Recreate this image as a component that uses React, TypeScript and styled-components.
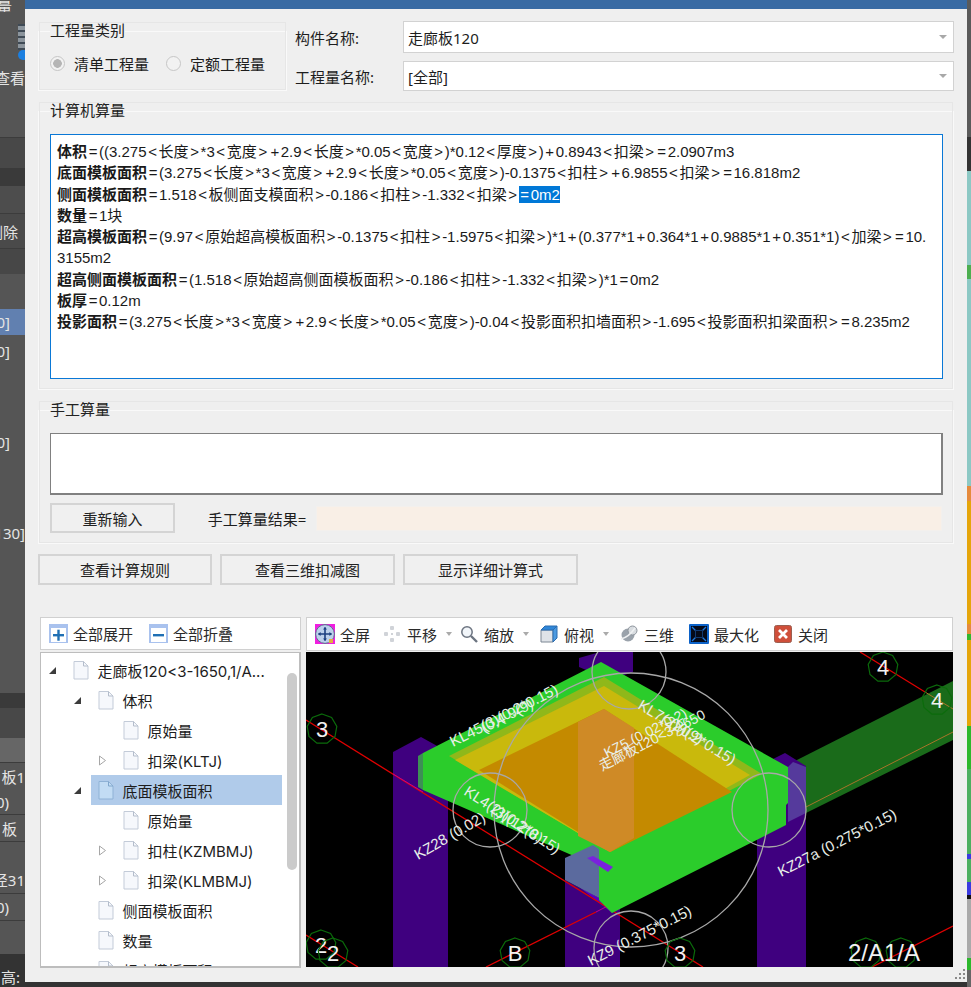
import React from 'react';
import styled, { createGlobalStyle } from 'styled-components';

const FONT = `"Noto Sans", "Noto Sans CJK SC", sans-serif`;
const WIDE = `"Inter", "Noto Sans CJK SC", sans-serif`;
const NARROW = `"Liberation Sans", "Noto Sans CJK SC", sans-serif`;

const Global = createGlobalStyle`
  html, body { margin: 0; padding: 0; background: #333; }
  body { width: 971px; height: 987px; overflow: hidden; font-family: ${FONT}; }
  * { box-sizing: border-box; }
`;

const Page = styled.div`
  display: grid;
  grid-template-columns: 25px 942px 4px;
  width: 971px;
  height: 987px;
  overflow: hidden;
`;

/* ---------- left strip (window behind the dialog) ---------- */
const Strip = styled.div`
  display: flex;
  flex-direction: column;
  overflow: hidden;
  background: #555;
`;
const SideRow = styled.div<{ $h: number; $bg?: string; $line?: boolean; $pad?: number }>`
  flex: 0 0 ${p => p.$h}px;
  display: flex;
  align-items: center;
  justify-content: flex-end;
  padding-right: ${p => p.$pad ?? 0}px;
  background: ${p => p.$bg ?? '#555'};
  border-bottom: ${p => (p.$line ? '1px solid #3c3c3c' : 'none')};
  color: #e4e4e4;
  font-size: 15px;
  white-space: nowrap;
  overflow: hidden;
`;
const SideIcon = styled.div`
  width: 7px;
  height: 26px;
  background: repeating-linear-gradient(#3f4a55 0 2px, #8b949c 2px 6px);
`;
const SideDot = styled.div`
  width: 7px;
  height: 10px;
  background: #1b7fe0;
  border-radius: 7px 0 0 7px;
`;

/* ---------- right strip (window behind the dialog) ---------- */
const RightStrip = styled.div`
  display: flex;
  flex-direction: column;
  overflow: hidden;
`;
const Band = styled.div<{ $h: number; $c: string }>`
  flex: 0 0 ${p => p.$h}px;
  background: ${p => p.$c};
`;

/* ---------- dialog ---------- */
const Dialog = styled.div`
  position: relative;
  height: 982px;
  background: #efefef;
  overflow: hidden;
  color: #1d1d1d;
  font-size: 15px;
`;
const TitleBar = styled.div`
  height: 9px;
  background: #386aa3;
`;
const Body = styled.div`
  padding: 12px 13px 0 13px;
  display: flex;
  flex-direction: column;
`;
const TopRow = styled.div`
  display: flex;
  gap: 8px;
  height: 70px;
`;
const Group = styled.fieldset<{ $w: string; $h: number; $mt?: number }>`
  width: ${p => p.$w};
  height: ${p => p.$h}px;
  margin: ${p => p.$mt ?? 0}px 0 0 0;
  padding: 0 11px;
  min-width: 0;
  border: 1px solid #f9f9f9;
  outline: 1px solid #e6e6e6;
  outline-offset: -2px;
`;
const Legend = styled.legend`
  padding: 0;
  margin-left: 0;
  height: 20px;
  line-height: 18px;
  background: #efefef;
  color: #222;
`;
const RadioRow = styled.div`
  display: flex;
  align-items: center;
  height: 32px;
  margin-top: 6px;
  white-space: nowrap;
`;
const Radio = styled.span<{ $on?: boolean }>`
  flex: 0 0 15px;
  height: 15px;
  border-radius: 50%;
  border: 1px solid #c6c6c6;
  background: ${p => (p.$on ? 'radial-gradient(circle, #b5b5b5 0 4px, #f2f2f2 4.6px)' : '#f2f2f2')};
  margin-right: 9px;
`;
const RadioText = styled.span`
  margin-right: 17px;
`;
const FormCol = styled.div`
  flex: 1;
  display: flex;
  flex-direction: column;
  gap: 8px;
`;
const FormRow = styled.div<{ $h: number }>`
  display: flex;
  align-items: center;
  height: ${p => p.$h}px;
`;
const FormLabel = styled.span`
  width: 108px;
`;
const Combo = styled.div`
  flex: 1;
  height: 100%;
  background: #fff;
  border: 1px solid #d2d2d2;
  display: flex;
  align-items: center;
  justify-content: space-between;
  padding: 0 6px 0 4px;
`;
const Caret = styled.span`
  width: 0;
  height: 0;
  border-left: 4px solid transparent;
  border-right: 4px solid transparent;
  border-top: 4px solid #a8a8a8;
`;
const FormulaBox = styled.div`
  height: 245px;
  margin-top: 13px;
  width: 893px;
  background: #fff;
  border: 1px solid #0a78d6;
  padding: 6px 6px;
  font-family: ${NARROW};
  font-size: 15px;
  line-height: 21.3px;
  color: #1a1a1a;
  white-space: nowrap;
`;
const FormulaLine = styled.div``;
const Strong = styled.b`
  font-weight: 700;
`;
const Op = styled.span`
  display: inline-block;
  width: 12px;
  text-align: center;
`;
const Selected = styled.span`
  background: #0078d7;
  color: #fff;
`;
const ManualBox = styled.div`
  height: 62px;
  width: 893px;
  margin-top: 13px;
  background: #fff;
  border: 1px solid #808080;
  border-width: 1px 2px 2px 1px;
`;
const ManualRow = styled.div`
  display: flex;
  align-items: center;
  margin-top: 8px;
  height: 30px;
`;
const Btn = styled.div<{ $w: number }>`
  width: ${p => p.$w}px;
  height: 100%;
  display: flex;
  align-items: center;
  justify-content: center;
  background: #f0f0f0;
  border: 2px solid #d4d4d4;
  color: #222;
`;
const ResultLabel = styled.span`
  margin-left: 33px;
  width: 108px;
  white-space: nowrap;
`;
const ResultField = styled.div`
  width: 627px;
  height: 25px;
  background: #f9efe6;
  border: 1px solid #f3f0ed;
`;
const ActionRow = styled.div`
  display: flex;
  gap: 8px;
  height: 31px;
  margin-top: 10px;
`;

/* ---------- bottom panels ---------- */
const Panels = styled.div`
  display: flex;
  gap: 5px;
  margin: 32px 0 0 2px;
`;
const TreePanel = styled.div`
  width: 261px;
  display: flex;
  flex-direction: column;
`;
const ViewPanel = styled.div`
  width: 647px;
  display: flex;
  flex-direction: column;
`;
const Toolbar = styled.div<{ $h: number }>`
  height: ${p => p.$h}px;
  display: flex;
  align-items: center;
  background: #fff;
  border: 1px solid #d0d0d0;
  padding-left: 8px;
  white-space: nowrap;
`;
const ToolItem = styled.div<{ $gap?: number; $ml?: number }>`
  display: flex;
  align-items: center;
  gap: ${p => p.$gap ?? 6}px;
  margin-left: ${p => p.$ml ?? 0}px;
  color: #2a2a2a;
`;
const ToolCaret = styled.span`
  width: 0;
  height: 0;
  margin-left: 3px;
  border-left: 3px solid transparent;
  border-right: 3px solid transparent;
  border-top: 4px solid #aaa;
`;
const TreeBox = styled.div`
  position: relative;
  height: 316px;
  margin-top: 2px;
  padding-top: 2px;
  background: #fff;
  border: 2px solid #bdbdbd;
  border-width: 1px 2px 2px 1px;
  overflow: hidden;
  font-family: ${WIDE};
`;
const TreeRow = styled.div<{ $level: number }>`
  display: flex;
  align-items: center;
  height: 30px;
  padding-left: ${p => p.$level * 25}px;
`;
const ArrowCell = styled.span`
  flex: 0 0 32px;
  display: flex;
  justify-content: flex-start;
  padding-left: 7px;
`;
const RowBody = styled.div<{ $sel?: boolean }>`
  flex: 1;
  min-width: 0;
  height: 30px;
  display: flex;
  align-items: center;
  gap: 8.500px;
  margin-left: -7px;
  margin-right: 17px;
  padding-left: 7px;
  background: ${p => (p.$sel ? '#b0cbea' : 'transparent')};
  white-space: nowrap;
`;
const ScrollThumb = styled.div`
  position: absolute;
  left: 246px;
  top: 20px;
  width: 10px;
  height: 197px;
  border-radius: 5px;
  background: #cbcbcb;
`;
const Canvas = styled.svg`
  display: block;
  width: 647px;
  height: 315px;
  margin-top: 1px;
  background: #000;
`;
const Grip = styled.svg`
  position: absolute;
  right: 1px;
  bottom: 2px;
  width: 12px;
  height: 12px;
`;

/* ---------- formula text: operators are wider than the digits ---------- */
const Formula = ({ text }: { text: string }) => (
  <>
    {text.split(/([<>=+])/).map((part, i) =>
      /^[<>=+]$/.test(part) ? <Op key={i}>{part}</Op> : part
    )}
  </>
);

/* ---------- drawings ---------- */
const Doc = ({ sel }: { sel?: boolean }) => (
  <svg width="16" height="19" viewBox="0 0 16 19">
    <path d="M1 .5h9.5L15 5v13H1z" fill={sel ? '#c2dcf4' : '#f6f8fc'} stroke={sel ? '#8fb2d6' : '#c3cbd8'} />
    <path d="M10.5 .5V5H15" fill="none" stroke={sel ? '#7fa6cc' : '#b4bdcb'} />
  </svg>
);
const Open = () => (
  <svg width="9" height="9" viewBox="0 0 9 9"><path d="M8 1v7H1z" fill="#3c3c3c" /></svg>
);
const Closed = () => (
  <svg width="9" height="11" viewBox="0 0 9 11"><path d="M1.5 1l6 4.5-6 4.5z" fill="#fff" stroke="#a6a6a6" /></svg>
);
const PlusBox = ({ minus }: { minus?: boolean }) => (
  <svg width="19" height="19" viewBox="0 0 19 19">
    <rect width="19" height="19" fill="#a9c2ee" />
    <rect x="2" y="4" width="15" height="14" fill="#fff" />
    <rect x="4" y="10" width="11" height="2.4" fill="#1f6fb4" />
    {!minus && <rect x="8.3" y="5.7" width="2.4" height="11" fill="#1f6fb4" />}
  </svg>
);
const IconFull = () => (
  <svg width="20" height="20" viewBox="0 0 20 20">
    <rect width="20" height="20" fill="#f01ee0" />
    <circle cx="10" cy="10" r="9.4" fill="#bcd0ec" stroke="#5b6b8c" />
    <path d="M10 3.5v13M3.5 10h13" stroke="#1c3f80" strokeWidth="1.6" />
    <path d="M10 3l-2 2.6h4zM10 17l-2-2.6h4zM3 10l2.6-2v4zM17 10l-2.6-2v4z" fill="#1c3f80" />
    <rect x="14" y="15" width="4" height="4" fill="#e0b040" />
  </svg>
);
const IconPan = () => (
  <svg width="18" height="18" viewBox="0 0 18 18" fill="#d0d3d8">
    <rect x="7" y="1" width="4" height="4" rx="1" />
    <rect x="7" y="13" width="4" height="4" rx="1" />
    <rect x="1" y="7" width="4" height="4" rx="1" />
    <rect x="13" y="7" width="4" height="4" rx="1" />
    <rect x="8" y="8" width="2" height="2" />
  </svg>
);
const IconZoom = () => (
  <svg width="18" height="18" viewBox="0 0 18 18">
    <circle cx="7" cy="7" r="5.200" fill="#f2f6fa" stroke="#6c7480" strokeWidth="1.500" />
    <path d="M11 11l6 6" stroke="#6c7480" strokeWidth="2.400" />
  </svg>
);
const IconTop = () => (
  <svg width="18" height="18" viewBox="0 0 18 18">
    <path d="M1 5h12v12H1z" fill="#dfe3e8" stroke="#7c8794" />
    <path d="M1 5l4-4h12l-4 4z" fill="#2f86d8" stroke="#2a6cb0" />
    <path d="M13 5l4-4v12l-4 4z" fill="#4c9ae0" stroke="#2a6cb0" />
  </svg>
);
const Icon3D = () => (
  <svg width="18" height="18" viewBox="0 0 18 18">
    <circle cx="8" cy="10" r="6.500" fill="#9aa2ab" />
    <circle cx="12.500" cy="5.500" r="4.500" fill="#d8dce0" stroke="#8d949c" />
    <path d="M1 14C5 13 11 9 15 3" stroke="#eef0f2" strokeWidth="1.500" fill="none" />
  </svg>
);
const IconMax = () => (
  <svg width="20" height="20" viewBox="0 0 20 20">
    <rect width="20" height="20" rx="1" fill="#0c62c8" />
    <rect x="2" y="2" width="16" height="16" fill="#050a18" />
    <path d="M3 3l4 4M17 3l-4 4M3 17l4-4M17 17l-4-4" stroke="#1f7ae0" strokeWidth="1.300" />
    <rect x="6.500" y="6.500" width="7" height="7" fill="none" stroke="#123a70" />
  </svg>
);
const IconClose = () => (
  <svg width="18" height="18" viewBox="0 0 18 18">
    <rect x=".5" y=".5" width="17" height="17" rx="2" fill="#cf4f3a" stroke="#9b5f50" />
    <path d="M5 5l8 8M13 5l-8 8" stroke="#fff" strokeWidth="2.800" />
  </svg>
);

/* ---------- the 3D view, in page coordinates ---------- */
const ring = (x: number, y: number, r: number) =>
  Array.from({ length: 9 }, (_, i) => {
    const a = (i / 9) * Math.PI * 2 - Math.PI / 2;
    return `${(x + r * Math.cos(a)).toFixed(1)},${(y + r * Math.sin(a)).toFixed(1)}`;
  }).join(' ');
const AxisRing = ({ x, y }: { x: number; y: number }) => (
  <polygon points={ring(x, y, 15)} fill="none" stroke="#0b6b0b" strokeWidth="1.200" />
);
const AxisMark = ({ x, y, t, s = 22 }: { x: number; y: number; t: string; s?: number }) => (
  <g>
    <AxisRing x={x} y={y} />
    <text x={x} y={y + 8} fontSize={s} fill="#f2f2f2" textAnchor="middle" fontFamily="Liberation Sans, sans-serif">{t}</text>
  </g>
);
const Tag = ({ x, y, r, t, s = 15 }: { x: number; y: number; r: number; t: string; s?: number }) => (
  <text x={x} y={y} fontSize={s} fill="#e9efe9" transform={`rotate(${r} ${x} ${y})`} fontFamily="Liberation Sans, Noto Sans CJK SC, sans-serif">{t}</text>
);
const Scene = () => (
  <Canvas viewBox="306 652 647 315">
    {/* beam running away to the right */}
    <polygon points="793,762 953,681 953,740 806,813" fill="#1a6b1a" />
    <path d="M806,807 953,732" stroke="#a8742a" strokeWidth="1" />
    {/* purple columns */}
    <polygon points="579,667 579,658 600,652 633,652 633,672 610,680" fill="#3f007f" />
    <polygon points="393,752 421,737 448,752 448,967 393,967" fill="#3f007f" />
    <polygon points="565,880 599,898 620,890 620,967 565,967" fill="#3f007f" />
    <polygon points="757,775 773,759 785,753 806,766 806,967 757,967" fill="#3f007f" />
    <polygon points="578,886 612,913 620,905 620,890 599,898" fill="#5c00c0" />
    {/* red axes */}
    <path d="M306,720 703,967" stroke="#e00000" strokeWidth="1.300" />
    <path d="M306,935 358,967" stroke="#e00000" strokeWidth="1.300" />
    <path d="M486,967 596,912" stroke="#e00000" strokeWidth="1.300" />
    <path d="M596,912 625,897" stroke="#c00090" strokeWidth="1" />
    <path d="M860,652 925,692" stroke="#e00000" strokeWidth="1.300" />
    <path d="M925,692 953,709" stroke="#a8742a" strokeWidth="1" />
    <path d="M872,967 953,926" stroke="#e00000" strokeWidth="1.300" />
    <path d="M393,774 423,792" stroke="#c00090" strokeWidth="1" />
    {/* green slab frame */}
    <polygon points="423,753 601,662 788,767 788,803 786,805 786,825 612,913 599,900 599,867 423,790" fill="#2bcc2b" />
    <polygon points="418,756 423,753 423,790 418,787" fill="#3d8f55" />
    <polygon points="449,756 604,677 762,774 610,852" fill="#8fb81a" />
    <polygon points="455,760 604,686 750,775 610,852" fill="#c9b90c" />
    <polygon points="479,770 604,709 732,792 610,852" fill="#c48a00" />
    <polygon points="578,722 604,709 634,728 634,838 610,852 578,836" fill="#cf8a26" />
    {/* column showing through the slab */}
    <polygon points="565,858 593,845 599,849 599,898 565,880" fill="#5b6a9e" />
    <polygon points="587,858 593,856 613,867 608,872" fill="#7a22dd" />
    <polygon points="788,767 793,762 806,767 806,813 788,822" fill="#553a9c" />
    {/* selection circles */}
    <g fill="none" stroke="#a8a8a8" strokeWidth="1.300">
      <circle cx="631" cy="810" r="137" />
      <circle cx="490" cy="810" r="37" />
      <circle cx="629" cy="672" r="37" />
      <circle cx="769" cy="810" r="37" />
      <circle cx="631" cy="948" r="37" />
    </g>
    {/* axis marks */}
    <AxisMark x={322} y={729} t="3" />
    <AxisMark x={321} y={945} t="2" />
    <AxisMark x={333} y={953} t="2" />
    <AxisMark x={515} y={953} t="B" />
    <AxisMark x={680} y={953} t="3" />
    <AxisMark x={883} y={667} t="4" />
    <AxisMark x={937} y={700} t="4" />
    <AxisRing x={866} y={953} />
    <AxisRing x={901} y={953} />
    <text x={848} y={961} fontSize={24} fill="#f2f2f2" fontFamily="Liberation Sans, sans-serif">2/A1/A</text>
    {/* member tags */}
    <Tag x={453} y={747} r={-27} t="KL45(3)(0.2*0.15)" />
    <Tag x={484} y={733} r={-27} t="(0.4 9(9)" />
    <Tag x={463} y={794} r={33} t="KL4(2)(0.2*0.15)" />
    <Tag x={490} y={812} r={33} t="(3)(12(8)" />
    <Tag x={418} y={860} r={-30} t="KZ28 (0.02)" />
    <Tag x={637} y={708} r={31} t="KL7(2)(0.2*0.15)" />
    <Tag x={668} y={726} r={31} t="(2)(9)" />
    <Tag x={602} y={771} r={-27} t="走廊板120<3-1650" s={14} />
    <Tag x={607} y={758} r={-27} t="KZ5 (0.02*0.2)" s={14} />
    <Tag x={781} y={877} r={-27} t="KZ27a (0.275*0.15)" />
    <Tag x={591} y={966} r={-27} t="KZ9 (0.375*0.15)" />
  </Canvas>
);

const formulas: { b?: string; t: string; sel?: string }[] = [
  { b: '体积', t: '=((3.275<长度>*3<宽度>+2.9<长度>*0.05<宽度>)*0.12<厚度>)+0.8943<扣梁>=2.0907m3' },
  { b: '底面模板面积', t: '=(3.275<长度>*3<宽度>+2.9<长度>*0.05<宽度>)-0.1375<扣柱>+6.9855<扣梁>=16.818m2' },
  { b: '侧面模板面积', t: '=1.518<板侧面支模面积>-0.186<扣柱>-1.332<扣梁>', sel: '=0m2' },
  { b: '数量', t: '=1块' },
  { b: '超高模板面积', t: '=(9.97<原始超高模板面积>-0.1375<扣柱>-1.5975<扣梁>)*1+(0.377*1+0.364*1+0.9885*1+0.351*1)<加梁>=10.' },
  { t: '3155m2' },
  { b: '超高侧面模板面积', t: '=(1.518<原始超高侧面模板面积>-0.186<扣柱>-1.332<扣梁>)*1=0m2' },
  { b: '板厚', t: '=0.12m' },
  { b: '投影面积', t: '=(3.275<长度>*3<宽度>+2.9<长度>*0.05<宽度>)-0.04<投影面积扣墙面积>-1.695<投影面积扣梁面积>=8.235m2' },
];

const tree = [
  { l: 0, a: 'open', t: '走廊板120<3-1650,1/A...' },
  { l: 1, a: 'open', t: '体积' },
  { l: 2, a: '', t: '原始量' },
  { l: 2, a: 'closed', t: '扣梁(KLTJ)' },
  { l: 1, a: 'open', t: '底面模板面积', sel: true },
  { l: 2, a: '', t: '原始量' },
  { l: 2, a: 'closed', t: '扣柱(KZMBMJ)' },
  { l: 2, a: 'closed', t: '扣梁(KLMBMJ)' },
  { l: 1, a: '', t: '侧面模板面积' },
  { l: 1, a: '', t: '数量' },
  { l: 1, a: '', t: '超高模板面积' },
];

const bands: [number, string][] = [
  [137, '#5a5a5a'], [34, '#333'], [94, '#8cc8c4'], [14, '#4cae50'], [207, '#8cc8c4'], [15, '#e58a3c'],
  [123, '#e5a50a'], [10, '#e58a3c'], [6, '#2fb82f'], [86, '#e5a50a'], [43, '#2cb82c'], [85, '#4caf60'],
  [5, '#3a3ae0'], [23, '#4caf60'], [13, '#3a3ae0'], [4, '#111'], [14, '#aaa'], [45, '#aaa'], [12, '#2cb82c'], [17, '#666'],
];

export default function App() {
  return (
    <Page>
      <Global />
      <Strip>
        <SideRow $h={12} $pad={13}>量</SideRow>
        <SideRow $h={11} />
        <SideRow $h={27}><SideIcon /></SideRow>
        <SideRow $h={10}><SideDot /></SideRow>
        <SideRow $h={34}>查看</SideRow>
        <SideRow $h={44} $line />
        <SideRow $h={30} $bg="#484848" />
        <SideRow $h={18} $bg="#3a3a3a" />
        <SideRow $h={28} $bg="#4d4d4d" $line />
        <SideRow $h={35} $bg="#4a4a4a" $line $pad={7}>删除</SideRow>
        <SideRow $h={25} $bg="#474747" />
        <SideRow $h={35} />
        <SideRow $h={26} $bg="#6180b0" $pad={15}>0]</SideRow>
        <SideRow $h={31} $pad={15}>0]</SideRow>
        <SideRow $h={60} />
        <SideRow $h={31} $pad={15}>0]</SideRow>
        <SideRow $h={64} />
        <SideRow $h={24}>130]</SideRow>
        <SideRow $h={148} />
        <SideRow $h={15} $bg="#3a3a3a" />
        <SideRow $h={30} $bg="#484848" />
        <SideRow $h={25} $bg="#666" $line />
        <SideRow $h={26}>板1</SideRow>
        <SideRow $h={26} $line $pad={16}>0)</SideRow>
        <SideRow $h={27} $line $pad={8}>板</SideRow>
        <SideRow $h={24} />
        <SideRow $h={28} $line>径31</SideRow>
        <SideRow $h={27} $line $pad={16}>0)</SideRow>
        <SideRow $h={33} />
        <SideRow $h={11} $bg="#333" />
        <SideRow $h={22} $bg="#333" $pad={5}>高:</SideRow>
      </Strip>

      <Dialog>
        <TitleBar />
        <Body>
          <TopRow>
            <Group $w="249px" $h={70}>
              <Legend>工程量类别</Legend>
              <RadioRow>
                <Radio $on /><RadioText>清单工程量</RadioText>
                <Radio /><RadioText>定额工程量</RadioText>
              </RadioRow>
            </Group>
            <FormCol>
              <FormRow $h={32}><FormLabel>构件名称:</FormLabel><Combo>走廊板120<Caret /></Combo></FormRow>
              <FormRow $h={30}><FormLabel>工程量名称:</FormLabel><Combo>[全部]<Caret /></Combo></FormRow>
            </FormCol>
          </TopRow>

          <Group $w="916px" $h={289} $mt={10}>
            <Legend>计算机算量</Legend>
            <FormulaBox>
              {formulas.map((f, i) => (
                <FormulaLine key={i}>
                  {f.b && <Strong>{f.b}</Strong>}
                  <Formula text={f.t} />
                  {f.sel && <Selected><Formula text={f.sel} /></Selected>}
                </FormulaLine>
              ))}
            </FormulaBox>
          </Group>

          <Group $w="916px" $h={144} $mt={10}>
            <Legend>手工算量</Legend>
            <ManualBox />
            <ManualRow>
              <Btn $w={125}>重新输入</Btn>
              <ResultLabel>手工算量结果=</ResultLabel>
              <ResultField />
            </ManualRow>
          </Group>

          <ActionRow>
            <Btn $w={174}>查看计算规则</Btn>
            <Btn $w={175}>查看三维扣减图</Btn>
            <Btn $w={175}>显示详细计算式</Btn>
          </ActionRow>

          <Panels>
            <TreePanel>
              <Toolbar $h={33}>
                <ToolItem $gap={5}><PlusBox />全部展开</ToolItem>
                <ToolItem $gap={5} $ml={16}><PlusBox minus />全部折叠</ToolItem>
              </Toolbar>
              <TreeBox>
                {tree.map((n, i) => (
                  <TreeRow key={i} $level={n.l}>
                    <ArrowCell>
                      {n.a === 'open' && <Open />}
                      {n.a === 'closed' && <Closed />}
                    </ArrowCell>
                    <RowBody $sel={n.sel}><Doc sel={n.sel} />{n.t}</RowBody>
                  </TreeRow>
                ))}
                <ScrollThumb />
              </TreeBox>
            </TreePanel>
            <ViewPanel>
              <Toolbar $h={34}>
                <ToolItem $gap={5}><IconFull />全屏</ToolItem>
                <ToolItem $ml={13}><IconPan />平移<ToolCaret /></ToolItem>
                <ToolItem $ml={8}><IconZoom />缩放<ToolCaret /></ToolItem>
                <ToolItem $ml={11}><IconTop />俯视<ToolCaret /></ToolItem>
                <ToolItem $ml={11}><Icon3D />三维</ToolItem>
                <ToolItem $ml={15} $gap={5}><IconMax />最大化</ToolItem>
                <ToolItem $ml={15}><IconClose />关闭</ToolItem>
              </Toolbar>
              <Scene />
            </ViewPanel>
          </Panels>
        </Body>
        <Grip viewBox="0 0 12 12">
          <g fill="#8a8a8a">
            <rect x="9" y="1" width="2" height="2" />
            <rect x="5" y="5" width="2" height="2" /><rect x="9" y="5" width="2" height="2" />
            <rect x="1" y="9" width="2" height="2" /><rect x="5" y="9" width="2" height="2" />
            <rect x="9" y="9" width="2" height="2" />
          </g>
        </Grip>
      </Dialog>

      <RightStrip>
        {bands.map(([h, c], i) => <Band key={i} $h={h} $c={c} />)}
      </RightStrip>
    </Page>
  );
}
